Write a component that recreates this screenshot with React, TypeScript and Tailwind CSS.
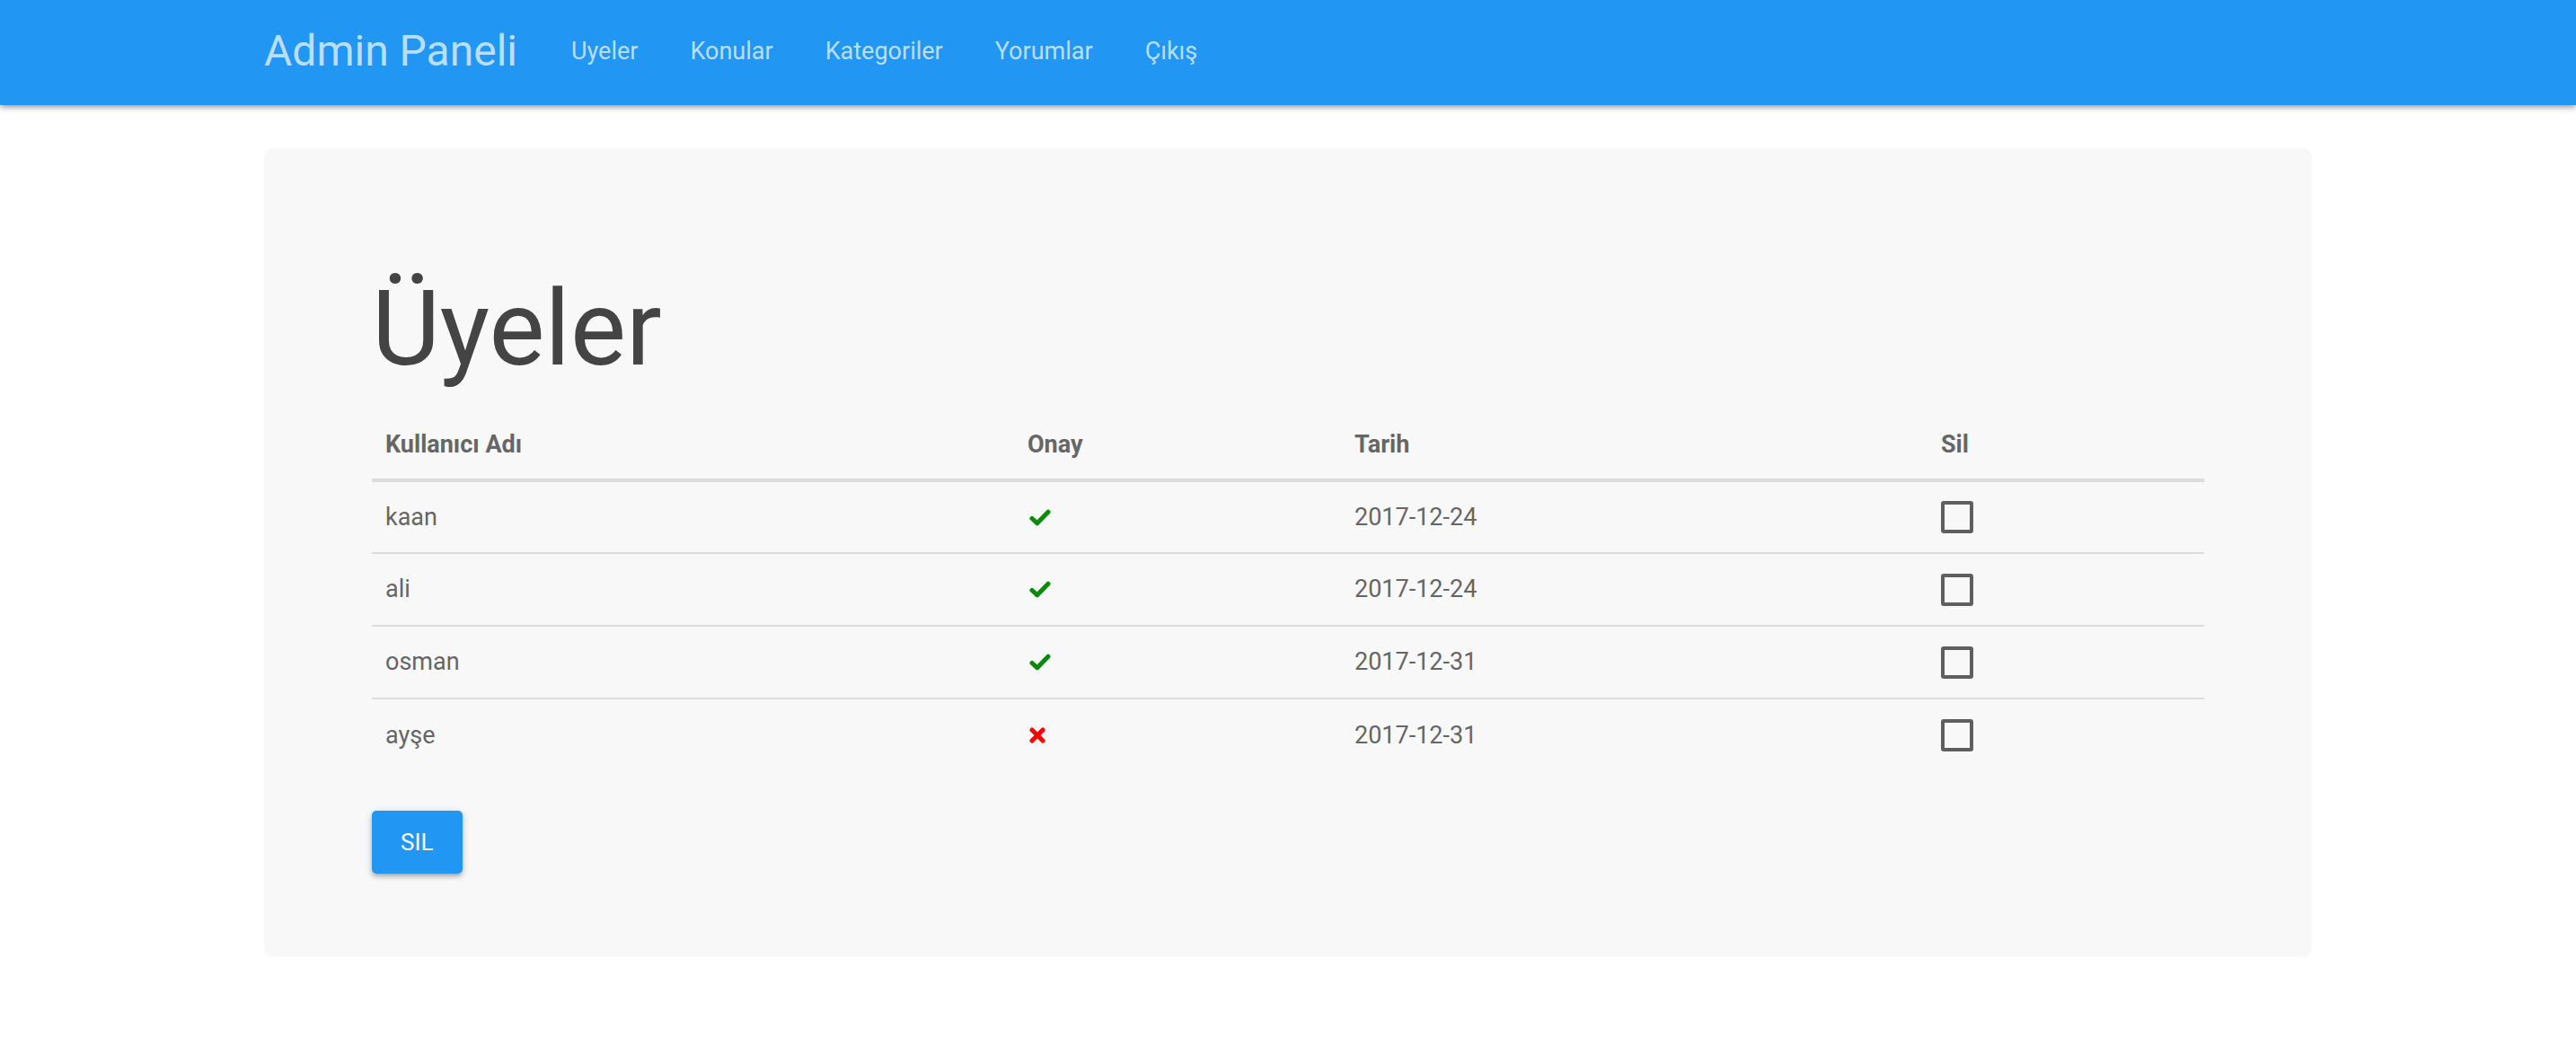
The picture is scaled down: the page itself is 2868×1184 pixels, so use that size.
import React from 'react'

const NAV_LINKS = ['Uyeler', 'Konular', 'Kategoriler', 'Yorumlar', 'Çıkış']

const USERS = [
  { name: 'kaan', ok: true, date: '2017-12-24' },
  { name: 'ali', ok: true, date: '2017-12-24' },
  { name: 'osman', ok: true, date: '2017-12-31' },
  { name: 'ayşe', ok: false, date: '2017-12-31' },
]

function CheckMark() {
  return (
    <svg width="24" height="19" viewBox="0 0 24 19" className="block">
      <path d="M3 10.5 L8.8 15.8 L21 3.2" fill="none" stroke="#0a8a0a" strokeWidth="5" strokeLinecap="round" strokeLinejoin="round" />
    </svg>
  )
}

function CrossMark() {
  return (
    <svg width="18" height="18" viewBox="0 0 18 18" className="block">
      <path d="M3 3 L15 15 M15 3 L3 15" fill="none" stroke="#ff0000" strokeWidth="5" strokeLinecap="round" />
    </svg>
  )
}

export default function App() {
  return (
    <div className="min-h-[1184px] bg-white font-['Roboto',sans-serif]">
      {/* Üst menü */}
      <nav className="h-[117px] bg-[#2196f3] shadow-[0_4px_4px_0_rgba(0,0,0,0.14),0_5px_2px_-4px_rgba(0,0,0,0.12),0_2px_9px_0_rgba(0,0,0,0.2)]">
        <div className="w-[2280px] mx-auto h-full flex items-center">
          <a className="text-[48px] leading-none text-white/70 pb-[4px]">Admin Paneli</a>
          <ul className="flex ml-[31px] pb-[3px]">
            {NAV_LINKS.map((label) => (
              <li key={label}>
                <a className="block px-[29px] text-[27px] text-white/70">{label}</a>
              </li>
            ))}
          </ul>
        </div>
      </nav>

      {/* İçerik kartı */}
      <div className="w-[2280px] mx-auto mt-[48px] bg-[#f8f8f8] rounded-[10px] px-[120px] pt-[138px] pb-[93px]">
        <h1 className="text-[117px] leading-[126px] font-normal text-[#444] mb-[28px]">Üyeler</h1>

        <table className="w-full border-collapse text-[27px] text-[#666]">
          <thead>
            <tr className="border-b-4 border-[#dcdcdc]">
              <th className="w-[715px] h-[78px] pl-[15px] text-left font-bold">Kullanıcı Adı</th>
              <th className="w-[364px] h-[78px] pl-[15px] text-left font-bold">Onay</th>
              <th className="w-[653px] h-[78px] pl-[15px] text-left font-bold">Tarih</th>
              <th className="h-[78px] pl-[15px] text-left font-bold">Sil</th>
            </tr>
          </thead>
          <tbody>
            {USERS.map((u, i) => (
              <tr key={u.name} className={i < USERS.length - 1 ? 'border-b-2 border-[#dcdcdc]' : ''}>
                <td className="h-[81px] pl-[15px]">{u.name}</td>
                <td className="h-[81px] pl-[17px]">{u.ok ? <CheckMark /> : <CrossMark />}</td>
                <td className="h-[81px] pl-[15px]">{u.date}</td>
                <td className="h-[81px] pl-[15px]">
                  <span className="block w-[36px] h-[36px] border-[4px] border-[#5f5f5f] rounded-[3px]" />
                </td>
              </tr>
            ))}
          </tbody>
        </table>

        <button className="mt-[44px] h-[70px] px-[32px] bg-[#2196f3] text-white text-[26px] rounded-[5px] shadow-[0_4px_4px_0_rgba(0,0,0,0.14),0_5px_2px_-4px_rgba(0,0,0,0.12),0_2px_9px_0_rgba(0,0,0,0.2)]">
          SIL
        </button>
      </div>
    </div>
  )
}
